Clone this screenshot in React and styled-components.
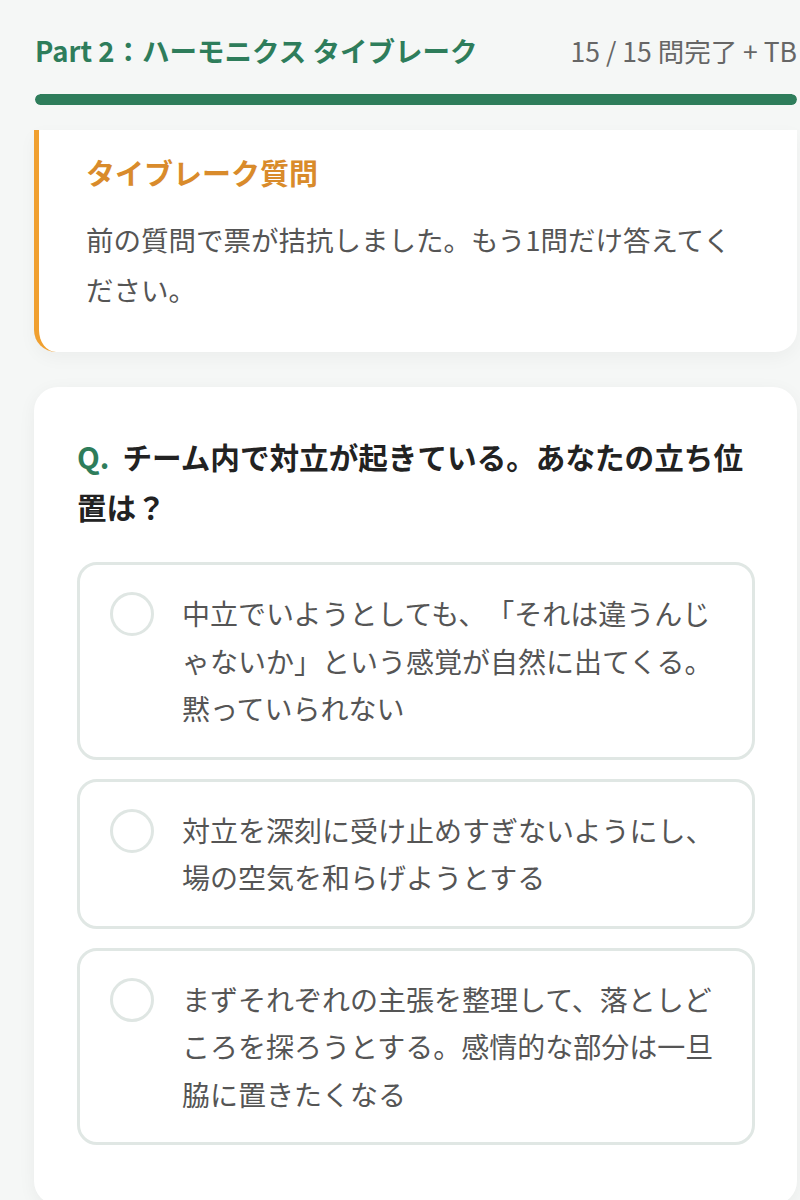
import React from 'react';
import styled, { createGlobalStyle } from 'styled-components';

const GlobalStyle = createGlobalStyle`
  html, body {
    margin: 0;
    padding: 0;
    background: #f5f7f6;
  }
  body {
    font-family: "Noto Sans CJK JP", "Noto Sans", sans-serif;
    -webkit-font-smoothing: antialiased;
    text-spacing-trim: space-all;
  }
`;

const Page = styled.div`
  min-height: 1200px;
  padding: 32px 3px 0 34px;
  box-sizing: border-box;
  overflow: hidden;
  line-break: loose;
`;

const Header = styled.div`
  display: flex;
  justify-content: space-between;
  align-items: center;
  height: 36px;
  padding-left: 1px;
  white-space: nowrap;
`;

const PartTitle = styled.div`
  color: #2e7d5b;
  font-size: 27.5px;
  font-weight: 700;
`;

const Count = styled.div`
  color: #666;
  font-size: 26.5px;
`;

// progress track, full since the last question is done
const Track = styled.div`
  margin-top: 26px;
  margin-left: 1px;
  height: 11px;
  border-radius: 6px;
  background: #e2e8e5;
  overflow: hidden;
`;

const Fill = styled.div`
  height: 100%;
  background: #2e7d5b;
  border-radius: 6px;
`;

const NoticeCard = styled.div`
  margin-top: 25px;
  background: #fff;
  border-left: 5px solid #f0a030;
  border-radius: 0 0 22px 22px;
  padding: 22px 52px 38px 47px;
  box-shadow: 0 6px 18px rgba(0, 0, 0, 0.04);
`;

const NoticeTitle = styled.div`
  color: #d98b2b;
  font-size: 29px;
  font-weight: 700;
  line-height: 40px;
`;

const NoticeText = styled.p`
  margin: 22px 0 0;
  color: #555;
  font-size: 27.5px;
  line-height: 50px;
`;

const QuestionCard = styled.div`
  margin-top: 35px;
  background: #fff;
  border-radius: 24px;
  padding: 45px 42px 60px 43px;
  box-shadow: 0 4px 18px rgba(0, 0, 0, 0.05);
`;

const Question = styled.h2`
  margin: 0;
  color: #222;
  font-size: 29.6px;
  font-weight: 700;
  line-height: 50px;
`;

const QMark = styled.span`
  display: inline-block;
  color: #2e7d5b;
  margin-right: 13px;
`;

const Options = styled.div`
  margin-top: 30px;
  display: flex;
  flex-direction: column;
  gap: 19px;
`;

const Option = styled.label`
  display: flex;
  align-items: flex-start;
  gap: 28px;
  border: 3px solid #e0e7e4;
  border-radius: 20px;
  padding: 25px 20px 24px 30px;
  background: #fff;
  cursor: pointer;
`;

const Radio = styled.span`
  flex: none;
  width: 44px;
  height: 44px;
  box-sizing: border-box;
  border: 3px solid #dfe6e3;
  border-radius: 50%;
  margin-top: 2px;
`;

const OptionText = styled.span`
  width: 545px;
  color: #555;
  font-size: 28px;
  line-height: 47.5px;
`;

const options = [
  '中立でいようとしても、「それは違うんじゃないか」という感覚が自然に出てくる。黙っていられない',
  '対立を深刻に受け止めすぎないようにし、場の空気を和らげようとする',
  'まずそれぞれの主張を整理して、落としどころを探ろうとする。感情的な部分は一旦脇に置きたくなる',
];

export default function App() {
  return (
    <>
      <GlobalStyle />
      <Page>
        <Header>
          <PartTitle>Part 2：ハーモニクス タイブレーク</PartTitle>
          <Count>15 / 15 問完了 + TB</Count>
        </Header>
        <Track>
          <Fill style={{ width: '100%' }} />
        </Track>

        <NoticeCard>
          <NoticeTitle>タイブレーク質問</NoticeTitle>
          <NoticeText>前の質問で票が拮抗しました。もう1問だけ答えてください。</NoticeText>
        </NoticeCard>

        <QuestionCard>
          <Question>
            <QMark>Q.</QMark>チーム内で対立が起きている。あなたの立ち位置は？
          </Question>
          <Options>
            {options.map((text) => (
              <Option key={text}>
                <Radio />
                <OptionText>{text}</OptionText>
              </Option>
            ))}
          </Options>
        </QuestionCard>
      </Page>
    </>
  );
}
